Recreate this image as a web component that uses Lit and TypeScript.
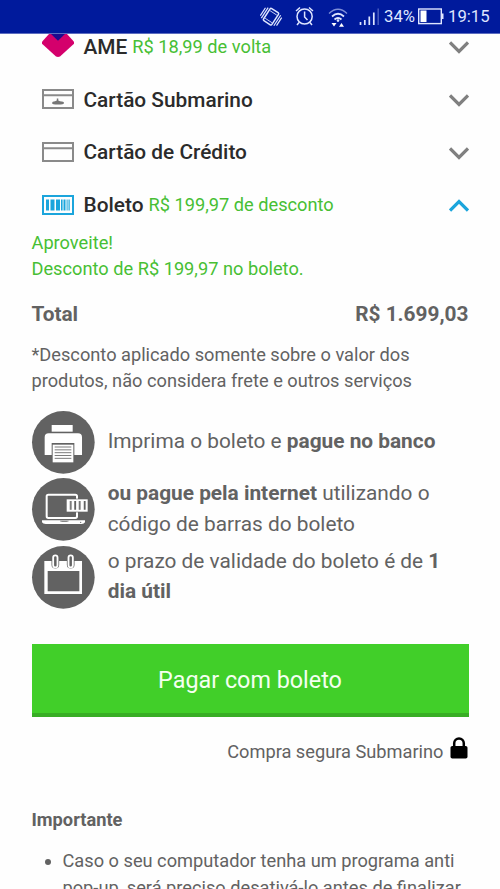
import { LitElement, html, css, svg } from "lit";
import { customElement, property } from "lit/decorators.js";

const icons = {
  ame: html`<svg width="32" height="23" viewBox="1 0 32 23.500" preserveAspectRatio="none">
    <path d="M1 8 8 0H26L33 8V10L19 23Q17 24 15 23L1 10Z" fill="#d4006c" />
    <path d="M10 0H24L17 7Z" fill="#1d0b8e" />
  </svg>`,
  sub: html`<svg width="32" height="20" viewBox="0 0 32 20" fill="none">
    <path d="M1 1H31V19H1ZM1 6.300H31" stroke="#8a8a8a" stroke-width="2" />
    <path d="M10 14q0-1.600 3-1.800l1.800-.7V9.600h1.500v1.900l1.700.8q4 .2 4 1.700t-6 1.600q-6-.1-6-1.600Z" fill="#777" />
  </svg>`,
  card: html`<svg width="32" height="20" viewBox="0 0 32 20" fill="none">
    <path d="M1 1H31V19H1ZM1 6.300H31" stroke="#8a8a8a" stroke-width="2" />
  </svg>`,
  boleto: html`<svg width="32" height="20" viewBox="0 0 32 20">
    <path d="M1 1H31V19H1Z" fill="none" stroke="#1ba5dc" stroke-width="2" />
    <path d="M4 4.500h3v11H4ZM8.500 4.500h4v11h-4ZM14 4.500h4v11h-4ZM19 4.500h1.600v11H19ZM21.500 4.500h2v11h-2ZM24.600 4.500h1v11h-1ZM26.500 4.500h1.200v11h-1.200Z" fill="#1ba5dc" />
  </svg>`,
  printer: svg`
    <rect x="95" y="75" width="63" height="20" fill="#fff" />
    <path d="M74 165V112Q74 100 86 100H174Q186 100 186 112V165H163V129H95V165Z" fill="#fff" />
    <rect x="98" y="134" width="62" height="53" fill="#fff" />
    <path d="M104 141H154M104 149.500H154M104 158H154M104 166.500H154M104 175H154" stroke="#626262" stroke-width="2.500" />`,
  laptop: svg`
    <rect x="80" y="284" width="91" height="70" rx="5" fill="none" stroke="#fff" stroke-width="6" />
    <path d="M66 361H195V367Q192 372 185 372H77Q69 372 66 367Z" fill="#fff" />
    <path d="M120 362H146V364Q133 367 120 364Z" fill="#626262" />
    <circle cx="182" cy="367" r="2" fill="#626262" />
    <rect x="138" y="296" width="67" height="41" fill="#626262" />
    <rect x="140" y="298" width="63" height="37" fill="#fff" />
    <path d="M152 303V329M165.500 303V329M179 303V329M194 303V329" stroke="#626262" stroke-width="5.500" />
    <path d="M152.500 303V329M180 303V329" stroke="#ccc" stroke-width="1.200" />`,
  calendar: svg`
    <path d="M73 482H186V581H73ZM83 512V573H178V512Z" fill="#fff" fill-rule="evenodd" />
    <path d="M106 471V493M152 471V493" stroke="#626262" stroke-width="23" stroke-linecap="round" />
    <g fill="#626262" stroke="#fff" stroke-width="5.500"><rect x="99.500" y="465" width="13" height="36" rx="6.500" /><rect x="145.500" y="465" width="13" height="36" rx="6.500" /></g>`,
};

@customElement("status-bar")
export class StatusBar extends LitElement {
  static styles = css`
    :host { display: flex; align-items: center; height: 34px; padding-right: 11px; justify-content: flex-end;
      background: #001a9c; border-bottom: 1px solid #5c6cc0; box-sizing: border-box; color: #dfe6ff; font-size: 16.700px; }
    svg { display: block; flex: none; }
    .pct { width: 31px; white-space: nowrap; position: relative; left: -1px; }
    .time { width: 41px; white-space: nowrap; margin-left: 4px; }
  `;
  render() {
    return html`
      <svg width="125" height="33" viewBox="260 0 125 33" fill="none" stroke="#dfe6ff" stroke-width="1.300">
        <g transform="translate(271 16.700) rotate(33)">
          <rect x="-5" y="-7.200" width="10" height="14.400" rx="1.200" stroke-width="1.500" />
          <path d="M-4 -4.500H4M-4 4.500H4" stroke-width="0.800" />
          <path d="M-7.300 -6V6.500M-9.500 -4.500V5M7.300 -6.500V6M9.500 -5V4.500" stroke-width="1.200" />
        </g>
        <circle cx="304.600" cy="16.500" r="7.600" stroke-width="1.500" />
        <path d="M304.600 11.500V17L307.500 20M296 11 300 7.500M309 7.500 313 11M299 22.500 297 25M310 22.500 312 25" stroke-width="1.500" />
        <path d="M329 13.500Q338 5 347 13.500" stroke="#7f8fd8" />
        <path d="M332 16.500Q338 11 344 16.500M334.500 19.500Q338 16.500 341.500 19.500" stroke-width="1.700" />
        <circle cx="338" cy="20.600" r="1.300" fill="#dfe6ff" stroke="none" />
        <path d="M331.500 23H336.500L334 26.500ZM339 26.800 341.500 23 344 26.800Z" fill="#fff" stroke="none" />
        <path d="M360.500 22V25M364.800 20V25M369.300 16.500V25M373.800 12.500V25" stroke-width="1.700" />
        <path d="M378.200 8.500V25" stroke="#4458bd" stroke-width="1.600" />
      </svg>
      <span class="pct">34%</span>
      <svg width="28" height="17" viewBox="0 0 28 17">
        <rect x="2.700" y="1" width="22.600" height="14.600" fill="none" stroke="#dfe6ff" stroke-width="1.400" />
        <rect x="4.500" y="2.500" width="6" height="11.500" fill="#fff" /><rect x="26" y="5.500" width="1.500" height="5.500" fill="#dfe6ff" />
      </svg>
      <span class="time">19:15</span>`;
  }
}

@customElement("pay-option")
export class PayOption extends LitElement {
  @property() icon: "ame" | "sub" | "card" | "boleto" = "card";
  @property() label = "";
  @property() note = "";
  @property({ type: Boolean }) open = false;
  static styles = css`
    :host { display: flex; align-items: center; height: 52.700px; padding: 0 31px 0 41.500px; white-space: nowrap; }
    .icon { width: 34px; margin-right: 8px; display: flex; position: relative; top: -0.500px; }
    .ame { top: -1.500px; }
    .label { font-size: 20.830px; font-weight: 500; color: #2b2b2b; }
    .note { font-size: 18.230px; color: #47bf34; margin-left: 5px; position: relative; top: -0.700px; }
    .chev { margin-left: auto; stroke: #808080; position: relative; top: 0.700px; }
    .open { stroke: #1ba5dc; }
  `;
  render() {
    return html`<span class="icon ${this.icon}">${icons[this.icon]}</span><span class="label">${this.label}</span>
      ${this.note ? html`<span class="note">${this.note}</span>` : ""}
      <svg class="chev ${this.open ? "open" : ""}" width="20" height="13" viewBox="0 0 20 13" fill="none" stroke-width="3.200">
        <path d=${this.open ? "M1 11.500 10 2.500 19 11.500" : "M1 1.500 10 10.500 19 1.500"} />
      </svg>`;
  }
}

@customElement("app-root")
export class AppRoot extends LitElement {
  static styles = css`
    :host { display: block; height: 889px; overflow: hidden; background: #fefefe; color: #626262;
      font-family: Roboto, "Liberation Sans", sans-serif; font-size: 18.230px; }
    .options { height: 197.500px; display: flex; flex-direction: column; justify-content: flex-end; overflow: hidden; }
    .options > * { flex: none; }
    .body { padding: 0 31.500px; white-space: nowrap; }
    .deal { color: #47bf34; line-height: 26.400px; margin-top: -2px; }
    .total { display: flex; justify-content: space-between; font-weight: 700; font-size: 20.830px; line-height: 26px; margin-top: 18.500px; }
    .fine { line-height: 26.400px; margin-top: 15px; }
    .steps { margin-top: 16.500px; display: flex; flex-direction: column; gap: 4.600px; }
    .step { display: flex; align-items: center; gap: 13.500px; height: 62.700px; font-size: 20.830px; line-height: 30.500px; }
    .step svg { flex: none; overflow: visible; }
    .step span { position: relative; top: -0.800px; }
    .pay { display: block; width: 100%; height: 72.500px; margin-top: 36px; border: 0; border-bottom: 4px solid #38ad25; background: #41cf29;
      color: #f4fff0; font: inherit; font-size: 23.350px; padding: 2px 0 0; }
    .secure { display: flex; justify-content: flex-end; gap: 7px; align-items: center; height: 26px; margin-top: 22px; }
    .secure svg { position: relative; top: -3.500px; right: 0.500px; }
    .head { font-weight: 700; line-height: 26px; margin-top: 42.300px; }
    .list { margin: 15.300px 0 0; padding-left: 31px; line-height: 26.200px; }
  `;
  private step(icon: unknown, y: number, text: unknown) {
    return html`<div class="step"><svg width="62.7" height="62.7" viewBox="36 ${y} 188 188">
      <circle cx="130" cy=${y + 94} r="94" fill="#626262" />${icon}</svg><span>${text}</span></div>`;
  }
  render() {
    return html`
      <status-bar></status-bar>
      <div class="options">
        <pay-option icon="ame" label="AME" note="R$ 18,99 de volta"></pay-option>
        <pay-option icon="sub" label="Cartão Submarino"></pay-option>
        <pay-option icon="card" label="Cartão de Crédito"></pay-option>
        <pay-option icon="boleto" label="Boleto" note="R$ 199,97 de desconto" open></pay-option>
      </div>
      <div class="body">
        <div class="deal">Aproveite!<br />Desconto de R$ 199,97 no boleto.</div>
        <div class="total"><span>Total</span><span>R$ 1.699,03</span></div>
        <div class="fine">*Desconto aplicado somente sobre o valor dos<br />produtos, não considera frete e outros serviços</div>
        <div class="steps">
          ${this.step(icons.printer, 33, html`Imprima o boleto e <b>pague no banco</b>`)}
          ${this.step(icons.laptop, 234, html`<b>ou pague pela internet</b> utilizando o<br />código de barras do boleto`)}
          ${this.step(icons.calendar, 437, html`o prazo de validade do boleto é de <b>1<br />dia útil</b>`)}
        </div>
        <button class="pay">Pagar com boleto</button>
        <div class="secure"><span>Compra segura Submarino</span>
          <svg width="18" height="22" viewBox="0 0 18 22"><rect x="0.500" y="9" width="17" height="12.500" rx="1.800" />
            <path d="M4.200 10V6.300a4.800 4.800 0 0 1 9.600 0V10" fill="none" stroke="#000" stroke-width="2.500" /></svg>
        </div>
        <div class="head">Importante</div>
        <ul class="list"><li>Caso o seu computador tenha um programa anti<br />pop-up, será preciso desativá-lo antes de finalizar</li></ul>
      </div>`;
  }
}
